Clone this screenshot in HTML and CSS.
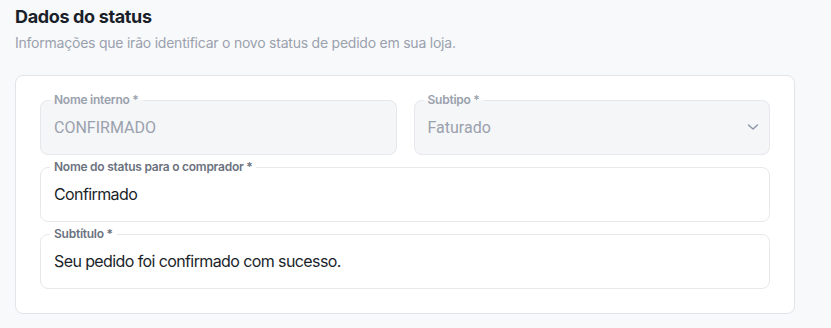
FILE: index.html
```html
<!DOCTYPE html>
<html lang="pt-BR">
<head>
    <meta charset="UTF-8">
    <meta name="viewport" content="width=device-width, initial-scale=1.0">
    <title>Dados do status</title>
    <link rel="stylesheet" href="styles.css">
</head>
<body>
    <div class="section-header">
        <h2>Dados do status</h2>
        <p>Informações que irão identificar o novo status de pedido em sua loja.</p>
    </div>

    <div class="card">
        <div class="row">
            <fieldset class="field disabled">
                <legend>Nome interno *</legend>
                <input type="text" value="CONFIRMADO" disabled>
            </fieldset>
            <fieldset class="field disabled">
                <legend>Subtipo *</legend>
                <div class="select-value">
                    <span>Faturado</span>
                    <svg width="12" height="8" viewBox="0 0 12 8"><path d="M1.5 2l4.5 4 4.5-4" fill="none" stroke="#8b95a5" stroke-width="1.4" stroke-linecap="round" stroke-linejoin="round"/></svg>
                </div>
            </fieldset>
        </div>
        <fieldset class="field">
            <legend>Nome do status para o comprador *</legend>
            <input type="text" value="Confirmado">
        </fieldset>
        <fieldset class="field">
            <legend>Subtítulo *</legend>
            <input type="text" value="Seu pedido foi confirmado com sucesso.">
        </fieldset>
    </div>
</body>
</html>
```

FILE: styles.css
```css
body {
    margin: 0;
    padding: 0 15px;
    background-color: #f8f9fb;
    font-family: Inter, "Noto Sans", sans-serif;
    color: #1b1f2a;
}
.section-header {
    padding-top: 5px;
}
.section-header h2 {
    margin: 0;
    font-size: 18px;
    font-weight: 700;
    line-height: 24px;
    letter-spacing: -0.35px;
}
.section-header p {
    margin: 4px 0 0;
    font-size: 14px;
    line-height: 20px;
    letter-spacing: -0.23px;
    color: #9aa1ad;
}
.card {
    margin-top: 22px;
    width: 780px;
    box-sizing: border-box;
    background-color: #fff;
    border: 1px solid #e1e4e9;
    border-radius: 8px;
    padding: 17px 24px 24px;
    display: flex;
    flex-direction: column;
    gap: 5px;
}
.row {
    display: flex;
    gap: 17px;
}
.row .field {
    flex: 1;
}
.field {
    margin: 0;
    padding: 0 13px 7px;
    border: 1px solid #e6e8ec;
    border-radius: 8px;
    min-width: 0;
}
.field legend {
    margin-left: -4px;
    padding: 0 4px;
    font-family: Inter, sans-serif;
    font-size: 12px;
    font-weight: 600;
    line-height: 14px;
    letter-spacing: -0.25px;
    color: #6b7280;
}
.field.disabled {
    background-color: #f5f6f8;
}
.field.disabled legend {
    color: #9aa1ad;
}
.field input {
    display: block;
    width: 100%;
    height: 40px;
    padding: 0;
    border: none;
    outline: none;
    background: transparent;
    font-family: Inter, "Noto Sans", sans-serif;
    font-size: 16px;
    letter-spacing: -0.6px;
    color: #1b1f2a;
}
.field input:disabled {
    font-family: Roboto, sans-serif;
    letter-spacing: 0;
    color: #9aa1ad;
}
.select-value {
    height: 40px;
    display: flex;
    align-items: center;
    justify-content: space-between;
    font-family: Roboto, sans-serif;
    font-size: 16px;
    color: #9aa1ad;
}
.select-value svg {
    margin-right: -3px;
}
```
